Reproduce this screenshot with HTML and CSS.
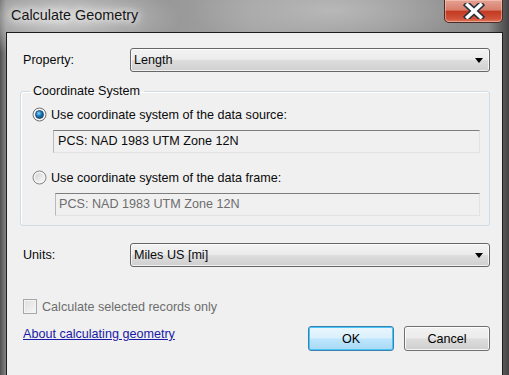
FILE: index.html
```html
<!DOCTYPE html>
<html lang="en">
<head>
    <meta charset="UTF-8">
    <meta name="viewport" content="width=device-width, initial-scale=1.0">
    <title>Calculate Geometry</title>
    <link rel="stylesheet" href="styles.css">
</head>
<body>

<div class="window">
    <header class="titlebar">
        <span class="title">Calculate Geometry</span>
        <button class="close" aria-label="Close">
            <svg width="26" height="16" viewBox="0 0 26 16">
                <path d="M6.5 2 L19.5 14 M19.5 2 L6.5 14" stroke="#27303d" stroke-width="6.5" stroke-linecap="square"/>
                <path d="M6.5 2 L19.5 14 M19.5 2 L6.5 14" stroke="#ffffff" stroke-width="3.6" stroke-linecap="square"/>
            </svg>
        </button>
    </header>

    <main class="panel">
        <div class="row">
            <label class="label">Property:</label>
            <div class="combo">
                <span>Length</span>
                <span class="arrow"></span>
            </div>
        </div>

        <fieldset class="group">
            <legend>Coordinate System</legend>

            <div class="radio-row">
                <svg class="radio" width="15" height="15" viewBox="0 0 15 15">
                    <defs>
                        <radialGradient id="dot" cx="40%" cy="35%" r="70%">
                            <stop offset="0" stop-color="#8fd6ff"/>
                            <stop offset="0.45" stop-color="#1f7fc6"/>
                            <stop offset="1" stop-color="#0b3d6e"/>
                        </radialGradient>
                    </defs>
                    <circle cx="7.5" cy="7.5" r="6.5" fill="#f4f4f4" stroke="#6f6f6f"/>
                    <circle cx="7.5" cy="7.5" r="4" fill="url(#dot)" stroke="#23476a" stroke-width="0.8"/>
                </svg>
                <span>Use coordinate system of the data source:</span>
            </div>
            <div class="field">PCS: NAD 1983 UTM Zone 12N</div>

            <div class="radio-row second">
                <svg class="radio" width="15" height="15" viewBox="0 0 15 15">
                    <defs>
                        <linearGradient id="off" x1="0" y1="0" x2="1" y2="1">
                            <stop offset="0" stop-color="#d4d4d4"/>
                            <stop offset="1" stop-color="#f8f8f8"/>
                        </linearGradient>
                    </defs>
                    <circle cx="7.5" cy="7.5" r="6.5" fill="#f4f4f4" stroke="#858585"/>
                    <circle cx="7.5" cy="7.5" r="4.5" fill="url(#off)"/>
                </svg>
                <span>Use coordinate system of the data frame:</span>
            </div>
            <div class="field disabled">PCS: NAD 1983 UTM Zone 12N</div>
        </fieldset>

        <div class="row units">
            <label class="label">Units:</label>
            <div class="combo">
                <span>Miles US [mi]</span>
                <span class="arrow"></span>
            </div>
        </div>

        <div class="footer">
            <div class="footer-left">
                <div class="check-row">
                    <span class="checkbox"></span>
                    <span>Calculate selected records only</span>
                </div>
                <a href="#" class="link">About calculating geometry</a>
            </div>
            <div class="buttons">
                <button class="btn default">OK</button>
                <button class="btn">Cancel</button>
            </div>
        </div>
    </main>
</div>

</body>
</html>
```

FILE: styles.css
```css
body {
    margin: 0;
    width: 509px;
    height: 375px;
    overflow: hidden;
    font-family: 'Liberation Sans', Arial, sans-serif;
    font-size: 12.6px;
    color: #0a0a0a;
    background:
        radial-gradient(ellipse 120px 40px at 60px 18px, #cfcfcf, rgba(207,207,207,0) 100%),
        radial-gradient(ellipse 140px 40px at 330px 10px, #b8b8b8, rgba(184,184,184,0) 100%),
        linear-gradient(to right, #505050 0px, #858585 6px, #a2a2a2 50%, #8a8a8a 96%, #444 100%);
}

.window {
    display: flex;
    flex-direction: column;
}

/* Barra de titulo */
.titlebar {
    height: 32px;
    display: flex;
    justify-content: space-between;
    align-items: flex-start;
    padding: 0 6px 0 11px;
}

.title {
    margin-top: 7px;
    font-size: 14.4px;
    color: #151515;
    text-shadow: 0 0 6px #f2f2f2, 0 0 10px #eaeaea, 0 0 14px #e0e0e0;
}

.close {
    width: 59px;
    height: 23px;
    padding: 0;
    margin: 0;
    border: 1px solid #4a2b26;
    border-top: none;
    border-radius: 0 0 5px 5px;
    background: linear-gradient(to bottom, #e4a193 0%, #d87f6c 45%, #c43a22 52%, #d0523a 85%, #e07a5a 100%);
    box-shadow: inset 0 0 0 1px rgba(255, 220, 210, 0.45);
    display: flex;
    align-items: center;
    justify-content: center;
}

/* Panel principal */
.panel {
    margin: 0 6px;
    height: 334px;
    background-color: #f0f0f0;
    border: 1px solid #1c1c1c;
    padding: 15px 12px 0 16px;
    display: flex;
    flex-direction: column;
}

.row {
    display: flex;
    align-items: center;
    height: 24px;
}

.label {
    width: 107px;
}

.combo {
    flex: 1;
    height: 22px;
    border: 1px solid #666;
    border-radius: 3px;
    background: linear-gradient(to bottom, #f3f3f3 0%, #ebebeb 48%, #dddddd 52%, #cfcfcf 100%);
    display: flex;
    align-items: center;
    justify-content: space-between;
    padding: 0 6px 0 3px;
    box-shadow: inset 0 0 0 1px rgba(255, 255, 255, 0.7);
}

.arrow {
    width: 0;
    height: 0;
    border-left: 4px solid transparent;
    border-right: 4px solid transparent;
    border-top: 5px solid #000;
}

/* Grupo Coordinate System */
.group {
    margin: 12px 0 0 -3px;
    box-sizing: border-box;
    width: 470px;
    height: 142px;
    border: 1px solid #d0dce3;
    border-radius: 3px;
    padding: 0 9px 0 11px;
    box-shadow: inset 1px 1px 0 #fff;
}

.group legend {
    padding: 0 4px 0 3px;
    margin-left: -2px;
    line-height: 14px;
}

.radio-row {
    display: flex;
    align-items: center;
    gap: 4px;
    margin-top: 9px;
    height: 15px;
}

.radio-row.second {
    margin-top: 17px;
}

.radio {
    flex: none;
}

.field {
    margin: 8px 0 0 21px;
    height: 21px;
    line-height: 21px;
    padding-left: 4px;
    border: 1px solid #e2e2e2;
    border-top-color: #7d7d7d;
    border-left-color: #b9b9b9;
    background-color: #f0f0f0;
}

.field.disabled {
    margin-left: 23px;
    padding-left: 3px;
    color: #6d6d6d;
}

.units {
    margin-top: 17px;
}

/* Pie */
.footer {
    display: flex;
    justify-content: space-between;
    align-items: flex-start;
    margin-top: 32px;
}

.check-row {
    display: flex;
    align-items: center;
    gap: 5px;
    height: 15px;
    color: #6d6d6d;
}

.checkbox {
    width: 12px;
    height: 13px;
    border: 1px solid #a8a8a8;
    background: linear-gradient(135deg, #dedede, #f7f7f7);
    box-shadow: inset 0 0 0 1px #f4f4f4;
}

.link {
    display: block;
    margin-top: 13px;
    color: #1a1aa6;
    text-decoration: underline;
}

.buttons {
    display: flex;
    gap: 10px;
    margin-top: 27px;
}

.btn {
    width: 86px;
    height: 25px;
    font-family: 'Liberation Sans', Arial, sans-serif;
    font-size: 12.6px;
    color: #000;
    border: 1px solid #707070;
    border-radius: 3px;
    background: linear-gradient(to bottom, #f2f2f2 0%, #ebebeb 48%, #dddddd 52%, #cfcfcf 100%);
    box-shadow: inset 0 0 0 1px rgba(255, 255, 255, 0.8);
}

.btn.default {
    border-color: #3c7fb1;
    background: linear-gradient(to bottom, #eaf6fd 0%, #d9f0fc 48%, #bee6fd 52%, #a7d9f5 100%);
    box-shadow: inset 0 0 0 1px #48c6f5;
}
```
